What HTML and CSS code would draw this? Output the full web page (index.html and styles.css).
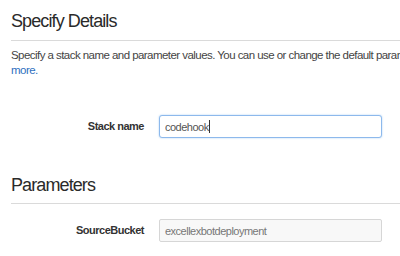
FILE: index.html
```html
<!DOCTYPE html>
<html>
<head>
<meta charset="utf-8" />
<title>Specify Details</title>
<link rel="stylesheet" href="styles.css">
</head>
<body>
<div class="page">
    <h2 class="title">Specify Details</h2>
    <p class="intro">Specify a stack name and parameter values. You can use or change the default parameters. <a href="#">Learn<br />more.</a></p>

    <div class="row row-first">
        <label class="label" for="stackName">Stack name</label>
        <span class="field-wrap">
            <input class="field field-focus" id="stackName" type="text" value="codehook" />
            <span class="caret"></span>
        </span>
    </div>

    <h2 class="title title-params">Parameters</h2>

    <div class="row">
        <label class="label" for="sourceBucket">SourceBucket</label>
        <input class="field field-off" id="sourceBucket" type="text" value="excellexbotdeployment" readonly />
    </div>
</div>
</body>
</html>
```

FILE: styles.css
```css
*{ margin:0; padding:0; box-sizing:border-box;}
html, body{ background:#fff; overflow:hidden;}
body{ font-family:"Liberation Sans", Arial, sans-serif; color:#444;}
.page{ width:580px; padding-left:11px;}

.title{ font-size:18px; line-height:20px; font-weight:normal; color:#2a2a2a; letter-spacing:-0.9px; margin-top:11px; padding-bottom:9px; border-bottom:1px solid #dadada;}
.title-params{ margin-top:37px; padding-bottom:8px;}

.intro{ font-size:11.5px; line-height:15px; letter-spacing:-0.55px; margin-top:7px; color:#444; white-space:nowrap;}
.intro a{ color:#2e6fc0; text-decoration:none;}

.row{ display:flex; align-items:center; gap:15px; margin-top:15px;}
.row-first{ margin-top:37px;}
.label{ width:133px; text-align:right; font-size:11px; line-height:23px; font-weight:bold; letter-spacing:-0.5px; color:#333;}
.field-wrap{ position:relative; display:block;}
.field{ display:block; width:223px; height:23px; padding:0 5px; font-family:"Liberation Sans", Arial, sans-serif; font-size:11px; letter-spacing:-0.5px; border-radius:3px; outline:none;}
.field-focus{ border:1px solid #8db9ec; box-shadow:0 0 2px #a9cdf4; color:#555; background:#fff;}
.field-off{ border:1px solid #d6d6d6; background:#f8f8f8; color:#777; border-radius:2px;}
.caret{ position:absolute; left:50px; top:5px; width:1px; height:13px; background:#333;}
```
